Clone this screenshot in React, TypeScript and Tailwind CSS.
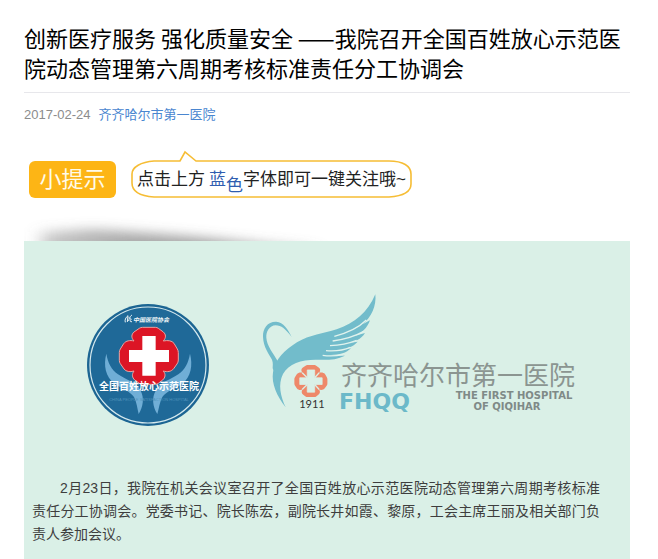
const PETALS =
  "M162 138C153 128 154 118 162 111L178 100Q182 97 188 97H226Q231 97 235 100L250 111C258 118 259 128 250 138C264 135 276 137 282 145L292 162Q295 167 295 173V195Q295 202 291 207L281 221C274 230 262 232 250 228C258 238 256 248 248 255L235 265Q231 268 226 268H188Q183 268 178 265L164 255C156 247 155 238 162 228C150 232 138 230 132 222L121 206Q118 202 118 196V172Q118 167 121 162L131 146C138 137 150 135 162 138Z";

const CROSS = "M187 123H227V165H267V201H227V242H187V201H147V165H187Z";

function TipBanner() {
  return (
    <div className="flex items-center gap-[15px] mt-[35px] pl-[5px]">
      <div className="flex h-[37px] w-[87px] items-center justify-center rounded-md bg-[#fdb515] text-[22px] text-[#fffbe9]">
        小提示
      </div>
      <div className="relative flex h-[38px] w-[281px] shrink-0 items-center justify-center whitespace-nowrap pt-0.5 text-[17px] text-[#222]">
        <svg
          className="absolute bottom-0 left-0 h-[48px] w-[281px]"
          viewBox="0 0 281 48"
          fill="none"
          stroke="#f6bd35"
          strokeWidth="1.6"
          aria-hidden="true"
        >
          <path d="M23 11C10 12 1 17 1 24V33C1 41 9 46 23 47H258C273 46 280 41 280 34V24C280 16 272 11 258 11H65L54 2L49 11Z" />
        </svg>
        <span className="relative">点击上方</span>
        <span className="relative ml-1 text-[#2f5db0]">蓝</span>
        <span className="relative top-1.5 text-[#2f5db0]">色</span>
        <span className="relative">字体即可一键关注哦~</span>
      </div>
    </div>
  );
}

function Shadow() {
  return (
    <svg className="mt-2.5 block h-[33px] w-[320px]" viewBox="0 0 320 33" aria-hidden="true">
      <defs>
        <filter id="soft" filterUnits="userSpaceOnUse" x="-40" y="-30" width="400" height="120">
          <feGaussianBlur stdDeviation="9 6" />
        </filter>
        <linearGradient id="fade">
          <stop offset="0" stopColor="#777" stopOpacity="0.4" />
          <stop offset="0.3" stopColor="#666" stopOpacity="0.55" />
          <stop offset="0.6" stopColor="#666" stopOpacity="0.6" />
          <stop offset="1" stopColor="#777" stopOpacity="0.4" />
        </linearGradient>
      </defs>
      <path d="M18 24L70 21L150 27L290 40V60H18Z" fill="url(#fade)" filter="url(#soft)" />
    </svg>
  );
}

function Seal() {
  return (
    <svg className="h-[140px] w-[140px] shrink-0" viewBox="0 -6 140 140" role="img" aria-label="全国百姓放心示范医院">
      <circle cx="68" cy="70" r="61" fill="#1c6593" />
      <circle cx="68" cy="70" r="58" fill="#1f6998" stroke="#d5e9ee" strokeWidth="1.2" />
      <g transform="scale(0.3333)">
        <path
          d="M79 176C70 210 76 246 104 266C126 281 150 288 162 306C170 322 172 340 176 357C190 335 193 308 182 287C168 260 136 254 114 238C94 223 84 205 79 176Z"
          fill="#70aed6"
        />
        <path
          d="M330 176C339 210 333 246 307 266C285 281 259 288 247 306C239 322 237 340 232 357C218 335 215 308 227 287C241 260 273 254 295 238C315 223 325 205 330 176Z"
          fill="#70aed6"
        />
        <path d={PETALS} fill="#dc1525" stroke="#e9a4a1" strokeWidth="3" />
        <path d={CROSS} fill="#fff" />
        <path
          d="M144 62C136 68 134 76 136 82M144 62L142 80C147 76 149 71 147 67M156 60C148 65 148 72 154 73C148 76 150 82 156 80"
          fill="none"
          stroke="#eef5f7"
          strokeWidth="3"
        />
      </g>
      <text x="53" y="27" fontSize="6" fontStyle="italic" fontWeight="700" fill="#eef5f7">
        中国医院协会
      </text>
      <text x="69" y="95" fontSize="10" fontWeight="700" textAnchor="middle" fill="#fff">
        全国百姓放心示范医院
      </text>
      <text x="69" y="106" fontSize="4" textAnchor="middle" fill="#4f93bb">
        CHINA PEOPLE SATISFACTION HOSPITAL
      </text>
    </svg>
  );
}

function HospitalLogo() {
  return (
    <svg className="h-[140px] w-[335px] shrink-0" viewBox="0 4 335 140" role="img" aria-label="齐齐哈尔市第一医院">
      <g transform="scale(0.3333)">
        <path
          d="M110 156C99 132 85 112 64 110C38 109 23 130 24 155C25 187 42 207 51 224C55 234 53 243 53 250L58 262L68 228C55 204 36 184 34 158C33 139 43 122 62 121C79 121 91 132 110 156Z"
          fill="#72bccb"
        />
        <path
          d="M92 367C65 333 49 296 54 262C61 221 90 195 126 172C165 149 205 146 245 133C299 115 338 82 361 28C365 62 349 98 323 118L345 106C337 129 320 146 296 154L330 144C319 162 298 172 276 175L308 170C294 186 273 193 250 193L288 190C273 205 251 211 221 210L270 212C243 226 213 225 181 224C139 224 101 236 84 267C68 299 77 334 92 367Z"
          fill="#72bccb"
        />
        <g fill="none" stroke="#e1f3ed" strokeWidth="4">
          <path d="M238 154C280 143 310 129 334 105" />
          <path d="M233 168C268 163 298 155 326 139" />
          <path d="M225 182C256 181 280 176 305 166" />
          <path d="M213 197C243 199 266 196 286 187" />
          <path d="M203 211C224 214 244 213 264 209" />
        </g>
        <g transform="translate(52 186) scale(0.56)">
          <path d={PETALS} fill="#ee8869" />
          <path d={CROSS} fill="#daf0e7" stroke="#daf0e7" strokeWidth="4" />
          <path
            d="M160 138L187 165M251 138L227 165M160 228L187 201M251 228L227 201"
            stroke="#daf0e7"
            strokeWidth="7"
          />
        </g>
      </g>
      <text x="57" y="123" fontSize="11" textAnchor="middle" fill="#333" className="font-['Lato',sans-serif]">
        1911
      </text>
      <text x="86" y="100" fontSize="26" fill="#8b9591">
        齐齐哈尔市第一医院
      </text>
      <text x="84" y="124" fontSize="22" fontWeight="700" fill="#6cb9c9" className="font-['DejaVu_Sans',sans-serif]">
        FHQQ
      </text>
      <g fontSize="10" fontWeight="700" textAnchor="middle" fill="#7f8a87" className="font-['DejaVu_Sans',sans-serif]">
        <text x="259" y="114">THE FIRST HOSPITAL</text>
        <text x="252" y="125">OF QIQIHAR</text>
      </g>
    </svg>
  );
}

export default function App() {
  return (
    <main className="flex min-h-screen flex-col bg-white px-6 pt-[22px] font-['Liberation_Sans','Noto_Sans_CJK_SC',sans-serif]">
      <header className="mr-1">
        <h1 className="border-b border-[#e7e7eb] pb-2.5 text-[22px] leading-[30px] text-black font-['Noto_Sans_CJK_SC',sans-serif]">
          创新医疗服务 强化质量安全 ——我院召开全国百姓放心示范医院动态管理第六周期考核标准责任分工协调会
        </h1>
        <div className="mt-3 flex gap-2 text-[13px] leading-5 text-[#8c8c8c]">
          <time dateTime="2017-02-24">2017-02-24</time>
          <a href="#hospital" className="text-[#4a86d0]">
            齐齐哈尔市第一医院
          </a>
        </div>
      </header>
      <TipBanner />
      <Shadow />
      <article id="hospital" className="mr-1 flex-1 bg-[#daf0e7] pt-12">
        <div className="flex gap-[35px] pl-14">
          <Seal />
          <HospitalLogo />
        </div>
        <p className="mt-12 pl-2 pr-[30px] indent-[2em] text-justify text-sm leading-[23px] text-[#3e3e3e]">
          2月23日，我院在机关会议室召开了全国百姓放心示范医院动态管理第六周期考核标准责任分工协调会。党委书记、院长陈宏，副院长井如霞、黎原，工会主席王丽及相关部门负责人参加会议。
        </p>
      </article>
    </main>
  );
}
